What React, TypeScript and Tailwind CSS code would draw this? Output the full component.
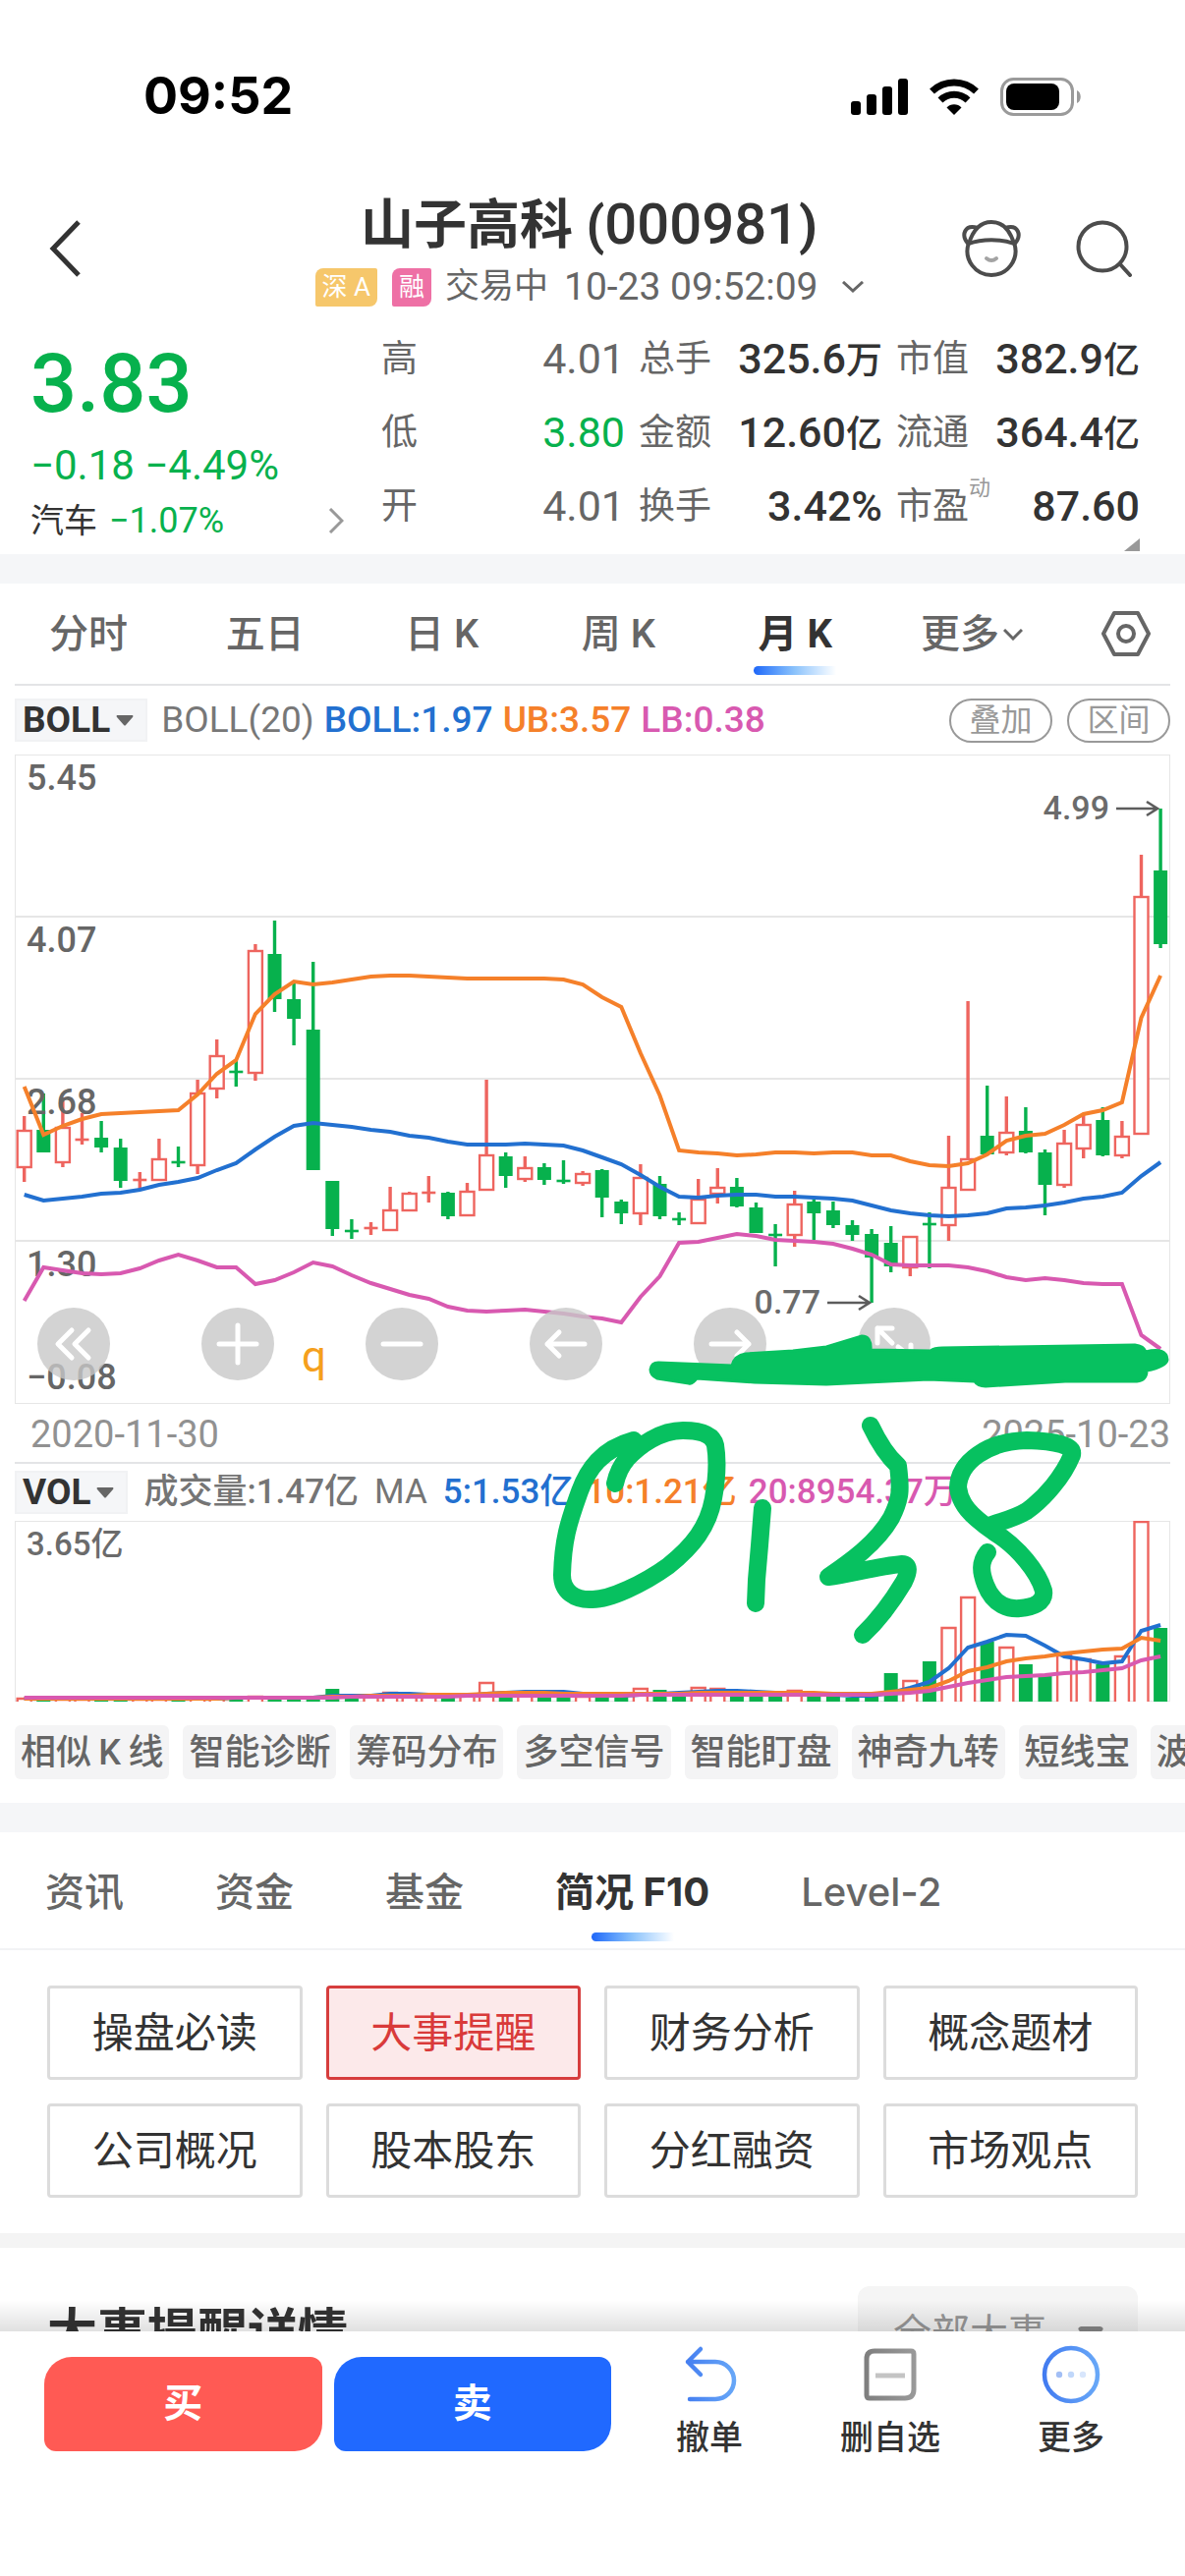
import { useState } from 'react'
import clsx from 'clsx'

type Candle = [high: number, top: number, bottom: number, low: number, up: 0 | 1]

// chart space is 1176 x 661, one candle per month
const CANDLES: Candle[] = [
    [368, 382, 421, 435, 1], [345, 382, 405, 405, 0], [349, 379, 416, 420, 1], [365, 391, 393, 397, 1],
    [373, 390, 400, 405, 0], [391, 400, 434, 441, 0], [425, 432, 434, 442, 1], [391, 411, 434, 434, 1],
    [399, 414, 416, 420, 0], [331, 344, 419, 427, 1], [290, 306, 341, 350, 1], [312, 322, 324, 338, 0],
    [193, 199, 325, 332, 1], [169, 203, 249, 262, 0], [232, 249, 269, 296, 0], [211, 280, 423, 423, 0],
    [434, 434, 483, 490, 0], [473, 484, 486, 493, 0], [476, 481, 483, 489, 1], [440, 463, 485, 485, 1],
    [445, 446, 465, 465, 1], [429, 445, 447, 456, 1], [445, 446, 470, 473, 0], [436, 444, 470, 470, 1],
    [331, 407, 444, 444, 1], [405, 409, 429, 441, 0], [409, 420, 433, 435, 1], [416, 420, 433, 438, 0],
    [413, 433, 435, 437, 0], [424, 426, 437, 439, 1], [422, 423, 451, 471, 0], [453, 455, 467, 478, 0],
    [417, 430, 468, 479, 1], [429, 437, 470, 473, 0], [466, 472, 474, 479, 0], [432, 452, 478, 478, 1],
    [421, 440, 448, 457, 1], [431, 440, 460, 461, 0], [456, 461, 487, 487, 0], [478, 488, 490, 521, 0],
    [444, 457, 490, 501, 1], [453, 455, 467, 494, 0], [455, 464, 479, 482, 0], [474, 479, 489, 495, 0],
    [483, 488, 512, 558, 0], [480, 497, 521, 527, 0], [490, 490, 523, 531, 1], [466, 477, 479, 523, 0],
    [388, 440, 480, 495, 1], [251, 411, 444, 444, 1], [337, 388, 407, 408, 0], [348, 384, 406, 408, 1],
    [359, 383, 405, 406, 0], [402, 405, 438, 469, 0], [382, 395, 439, 441, 1], [367, 376, 402, 411, 1],
    [359, 372, 408, 409, 0], [373, 388, 409, 411, 1], [102, 144, 387, 387, 1], [55, 118, 193, 197, 0],
]

const UB = [
    338, 387, 378, 371, 366, 365, 364, 363, 362, 346, 325, 311, 264, 244, 231, 234, 232, 229, 226, 225,
    225, 226, 227, 228, 228, 228, 228, 228, 229, 234, 247, 257, 304, 347, 403, 405, 406, 408, 407, 405,
    405, 406, 405, 405, 408, 408, 414, 418, 419, 416, 407, 393, 388, 386, 377, 366, 362, 354, 268, 225,
]
const BOLL = [
    448, 454, 452, 450, 447, 446, 443, 438, 435, 431, 423, 416, 402, 389, 378, 375, 377, 379, 382, 384,
    388, 390, 394, 397, 397, 397, 396, 397, 398, 403, 410, 417, 428, 440, 450, 451, 449, 448, 448, 450,
    450, 451, 452, 454, 459, 464, 467, 469, 470, 469, 467, 462, 461, 459, 456, 452, 450, 446, 429, 415,
]
const LB = [
    556, 522, 525, 528, 529, 528, 523, 515, 509, 515, 522, 522, 539, 535, 527, 517, 521, 530, 538, 544,
    550, 554, 562, 566, 567, 566, 565, 567, 569, 572, 574, 578, 552, 531, 497, 496, 492, 488, 490, 494,
    495, 496, 498, 503, 509, 519, 520, 520, 520, 522, 526, 532, 535, 533, 535, 538, 539, 539, 591, 605,
]

const VOLUMES = [
    181, 182, 182, 182, 182, 182, 182, 182, 181, 181, 180, 181, 179, 180, 181, 181, 171, 179, 179, 175,
    178, 178, 180, 178, 165, 179, 178, 178, 178, 179, 178, 178, 171, 172, 175, 170, 171, 175, 177, 176,
    173, 177, 178, 180, 179, 155, 163, 143, 109, 78, 123, 129, 146, 157, 137, 141, 146, 138, 1, 109,
]
const MA5 = [
    181, 181, 181, 181, 181, 181, 181, 181, 181, 181, 181, 180, 180, 180, 180, 180, 178, 178, 178, 176,
    176, 177, 178, 178, 176, 175, 174, 174, 174, 176, 177, 178, 177, 176, 175, 174, 173, 173, 174, 175,
    175, 176, 177, 178, 178, 175, 170, 164, 150, 129, 123, 116, 117, 127, 138, 141, 145, 143, 112, 106,
]
const MA10 = [
    181, 181, 181, 181, 181, 181, 181, 181, 181, 181, 181, 180, 180, 180, 180, 180, 179, 179, 178, 178,
    178, 177, 177, 177, 176, 175, 175, 175, 176, 176, 176, 176, 176, 176, 176, 175, 175, 175, 175, 175,
    175, 175, 176, 176, 176, 174, 172, 170, 163, 153, 149, 143, 140, 138, 135, 133, 131, 130, 119, 122,
]
const MA20 = [
    180, 180, 180, 180, 180, 180, 180, 180, 180, 180, 180, 180, 180, 180, 180, 180, 180, 179, 179, 179,
    179, 179, 179, 178, 178, 178, 178, 178, 178, 178, 178, 178, 177, 177, 177, 177, 177, 177, 177, 177,
    177, 177, 177, 177, 177, 176, 175, 173, 169, 165, 162, 159, 158, 157, 155, 154, 152, 150, 142, 138,
]

const RED = '#ee655f'
const GREEN = '#07b14d'
const STEP = 19.6

const cx = (i: number) => 9.7 + i * STEP
const toPoints = (ys: number[]) => ys.map((y, i) => `${cx(i)},${y}`).join(' ')

function Line({ data, color }: { data: number[]; color: string }) {
    return <polyline points={toPoints(data)} fill="none" stroke={color} strokeWidth={4} />
}

function PriceChart() {
    return (
        <svg viewBox="0 0 1176 661" className="block w-full h-auto">
            <rect x={0.5} y={0.5} width={1175} height={660} fill="none" stroke="#e6e6e6" />
            {[165, 330, 495].map((y) => (
                <path key={y} d={`M0 ${y}H1176`} stroke="#e6e6e6" strokeWidth={2} />
            ))}
            {CANDLES.map(([high, top, bottom, low, up], i) => {
                const thin = bottom - top <= 2
                const color = up ? RED : GREEN
                return (
                    <g key={i} stroke={color}>
                        <path d={`M${cx(i)} ${high}V${thin ? low : top}M${cx(i)} ${bottom}V${low}`} strokeWidth={3.4} />
                        {thin ? (
                            <path d={`M${cx(i) - 7} ${(top + bottom) / 2}h14`} strokeWidth={2.6} />
                        ) : up ? (
                            <rect x={cx(i) - 7} y={top + 1} width={14} height={bottom - top - 2} fill="#fff" strokeWidth={2.4} />
                        ) : (
                            <rect x={cx(i) - 7} y={top} width={14} height={bottom - top} fill={color} stroke="none" />
                        )}
                    </g>
                )
            })}
            <g fill="#666" fontSize={36} fontWeight={500}>
                <text x={12} y={36}>5.45</text>
                <text x={12} y={201}>4.07</text>
                <text x={12} y={366}>2.68</text>
                <text x={12} y={531}>1.30</text>
                <text x={12} y={646}>−0.08</text>
            </g>
            <Line data={UB} color="#f5802a" />
            <Line data={BOLL} color="#2270d0" />
            <Line data={LB} color="#d859b0" />
            <g fill="#6b6b6b" fontSize={34} fontWeight={500}>
                <text x={1114} y={66} textAnchor="end">4.99</text>
                <text x={820} y={569} textAnchor="end">0.77</text>
            </g>
            <g fill="none" stroke="#5c5c5c" strokeWidth={2.6}>
                <path d="M1121 55h42M1152 48l11 7-11 7" />
                <path d="M827 558h42M859 551l11 7-11 7" />
            </g>
            <text x={292} y={628} fontSize={44} fill="#f5a01d">q</text>
        </svg>
    )
}

function VolumeChart() {
    return (
        <svg viewBox="0 0 1176 184" className="block w-full h-auto">
            <rect x={0.5} y={0.5} width={1175} height={183} fill="none" stroke="#e6e6e6" />
            {VOLUMES.map((top, i) =>
                CANDLES[i][4] ? (
                    <path key={i} d={`M${cx(i) - 7} 184V${top}h14V184`} fill="#fff" stroke={RED} strokeWidth={2.4} />
                ) : (
                    <rect key={i} x={cx(i) - 7} y={top} width={14} height={184 - top} fill={GREEN} />
                )
            )}
            <Line data={MA5} color="#2270d0" />
            <Line data={MA10} color="#f5802a" />
            <Line data={MA20} color="#d859b0" />
            <text x={12} y={35} fontSize={33} fontWeight={500} fill="#6b6b6b">3.65亿</text>
        </svg>
    )
}

// hand-drawn marker on top of both charts
function Scribble() {
    return (
        <svg viewBox="0 0 1176 964" className="absolute inset-x-0 top-0 w-full h-auto pointer-events-none">
            <g fill="none" stroke="#07c160" strokeWidth={18} strokeLinecap="round" strokeLinejoin="round">
                <path d="M630 698C597 707 583 728 575 750C563 783 558 800 557 835C557 852 570 861 588 860C606 860 640 844 665 826C690 806 706 786 711 757C715 735 715 715 713 703C710 690 693 688 680 688C657 688 636 703 623 717C616 725 613 733 611 742" />
                <path d="M761 767L758 805L755 840L754 864" />
                <path d="M871 683C880 702 888 714 899 724C902 748 902 757 892 777C877 803 850 822 828 837C850 834 880 826 903 824C911 824 910 832 905 842C893 862 880 880 863 896" />
                <path d="M990 812C982 822 983 832 988 845C996 866 1012 870 1023 869C1035 868 1049 864 1047 851C1042 833 1022 807 996 791C972 774 962 763 960 746C961 720 990 699 1030 698C1060 699 1078 703 1076 713C1067 735 1048 757 1030 770C1015 779 1000 781 990 786" />
            </g>
            <path
                d="M655 619L730 622C732 614 737 611 744 610L792 607L826 603L862 592Q872 592 871 606L932 607Q936 604 944 604L1140 601Q1149 602 1151 608Q1172 603 1173 616Q1172 623 1152 627Q1152 637 1142 638L1069 638L988 643Q980 643 977 638L930 636L826 641L753 639L694 635Q690 641 686 640L654 635Q647 632 647 626Q648 619 655 619Z"
                fill="#07c160"
                stroke="#07c160"
                strokeWidth={3}
            />
        </svg>
    )
}

const CONTROLS = [
    { label: '展开', d: 'M25 13l-14 14 14 14M42 13l-14 14 14 14' },
    { label: '放大', d: 'M8 27h38M27 8v38' },
    { label: '缩小', d: 'M8 27h38' },
    { label: '左移', d: 'M8 27h38M20 15l-12 12 12 12' },
    { label: '右移', d: 'M8 27h38M34 15l12 12-12 12' },
    { label: '全屏', d: 'M10 26V11h15M10 11l15 15M31 30l5 4M44 28v16h-15' },
]

function ChartControls() {
    return (
        <div className="absolute left-[23px] top-[563px] flex gap-[93px]">
            {CONTROLS.map(({ label, d }) => (
                <button
                    key={label}
                    type="button"
                    aria-label={label}
                    className="flex size-[74px] items-center justify-center rounded-full bg-[#c8c8c8]/80"
                >
                    <svg viewBox="0 0 54 54" className="size-[54px]" fill="none" stroke="#fff" strokeWidth={5} strokeLinecap="round" strokeLinejoin="round">
                        <path d={d} />
                    </svg>
                </button>
            ))}
        </div>
    )
}

function StatusBar() {
    return (
        <div className="flex h-[180px] items-center justify-between pt-4 pl-[146px] pr-[106px]">
            <span className="font-['Inter',sans-serif] text-[52px] font-bold text-black">09:52</span>
            <div className="flex items-center gap-[22px]">
                <svg viewBox="0 0 58 37" className="h-[37px] w-[58px]">
                    <rect x={0} y={23} width={10} height={14} rx={3} />
                    <rect x={16} y={16} width={10} height={21} rx={3} />
                    <rect x={32} y={8} width={10} height={29} rx={3} />
                    <rect x={48} y={0} width={10} height={37} rx={3} />
                </svg>
                <svg viewBox="0 0 50 37" className="h-[37px] w-[50px]" fill="none" stroke="#000" strokeWidth={7}>
                    <path d="M2.5 13A32.5 32.5 0 0 1 47.5 13" />
                    <path d="M11 22A20 20 0 0 1 39 22" />
                    <path d="M25 37L17.500 29.500A10.500 10.500 0 0 1 32.500 29.500Z" fill="#000" stroke="none" />
                </svg>
                <svg viewBox="0 0 82 39" className="h-[39px] w-[82px]">
                    <rect x={1.500} y={1.500} width={72} height={36} rx={12} fill="none" stroke="#9a9a9a" strokeWidth={3} />
                    <rect x={6} y={6} width={54} height={27} rx={8} />
                    <path d="M78 13C83 15 83 24 78 26Z" fill="#9a9a9a" />
                </svg>
            </div>
        </div>
    )
}

function Header() {
    return (
        <header className="flex h-[146px] items-center pl-[46px] pr-[53px]">
            <button type="button" aria-label="返回" className="flex flex-1 justify-start">
                <svg viewBox="0 0 40 60" className="h-[60px] w-10" fill="none" stroke="#333" strokeWidth={5}>
                    <path d="M34 3L8 30l26 27" />
                </svg>
            </button>
            <div className="flex flex-col items-center gap-3 pt-1">
                <h1 className="text-[54px] leading-[60px] font-bold text-[#333]">
                    山子高科 (<span className="text-[58px] font-medium">000981</span>)
                </h1>
                <div className="flex h-10 items-center text-[#666]">
                    <span className="flex h-[39px] items-center rounded-tl-lg rounded-tr-xs rounded-br-lg rounded-bl-xs bg-[#f6c76b] px-[7px] text-[26px] text-white">
                        深 A
                    </span>
                    <span className="ml-[15px] flex h-[39px] items-center rounded-tl-lg rounded-tr-xs rounded-br-lg rounded-bl-xs bg-[#ee70a5] px-[7px] text-[26px] text-white">
                        融
                    </span>
                    <span className="ml-[14px] text-[35px]">交易中</span>
                    <span className="ml-4 text-[39px]">10-23 09:52:09</span>
                    <svg viewBox="0 0 22 12" className="ml-6 h-3 w-[22px]" fill="none" stroke="#666" strokeWidth={3}>
                        <path d="M1 1l10 9L21 1" />
                    </svg>
                </div>
            </div>
            <div className="flex flex-1 items-center justify-end gap-[56px]">
                <button type="button" aria-label="助手">
                    <svg viewBox="0 0 60 58" className="h-[58px] w-[60px]" fill="none" stroke="#4c4c4c" strokeWidth={4} strokeLinejoin="round">
                        <path d="M6.500 24.500A24.500 24.500 0 1 0 53.500 24.500" />
                        <path d="M7 24C11 11 18 2 30 2s19 9 23 22C40 19 20 19 7 24Z" />
                        <path d="M7 25C-2 15 3 4 16 8" />
                        <path d="M53 25C62 15 57 4 44 8" />
                        <path d="M25 39q5 4 10 0" stroke="#a3a3a3" strokeLinecap="round" />
                    </svg>
                </button>
                <button type="button" aria-label="搜索">
                    <svg viewBox="0 0 58 58" className="size-[58px]" fill="none" stroke="#4c4c4c" strokeWidth={4} strokeLinecap="round">
                        <circle cx={27} cy={27} r={24.5} />
                        <path d="M45 45l10 11" />
                    </svg>
                </button>
            </div>
        </header>
    )
}

interface Quote {
    label: string
    value: string
    unit?: string
    tone?: string
    sup?: string
}

const QUOTES: Quote[] = [
    { label: '高', value: '4.01', tone: 'text-[#666]' },
    { label: '总手', value: '325.6', unit: '万' },
    { label: '市值', value: '382.9', unit: '亿' },
    { label: '低', value: '3.80', tone: 'text-[#07b14d]' },
    { label: '金额', value: '12.60', unit: '亿' },
    { label: '流通', value: '364.4', unit: '亿' },
    { label: '开', value: '4.01', tone: 'text-[#666]' },
    { label: '换手', value: '3.42%' },
    { label: '市盈', value: '87.60', sup: '动' },
]

function QuotePanel() {
    return (
        <section className="relative flex h-[238px] pt-0.5 pl-[31px] pr-[46px]">
            <div className="w-[357px] pt-[23px] text-[#07b14d]">
                <div className="text-[83px] leading-[80px] font-medium">3.83</div>
                <div className="mt-[13px] text-[42px] leading-[60px]">−0.18 −4.49%</div>
                <a href="#sector" className="flex h-[52px] items-center pr-[38px] text-[36px]">
                    <span className="mr-3 text-[34px] text-[#333]">汽车</span>−1.07%
                    <svg viewBox="0 0 16 26" className="ml-auto h-[26px] w-4" fill="none" stroke="#999" strokeWidth={3}>
                        <path d="M2 1l12 12L2 25" />
                    </svg>
                </a>
            </div>
            <dl className="grid flex-1 grid-cols-3 content-start gap-x-[14px]">
                {QUOTES.map(({ label, value, unit, tone, sup }) => (
                    <div key={label} className="flex h-[75px] items-center justify-between">
                        <dt className="relative text-[37px] text-[#666]">
                            {label}
                            {sup && <span className="absolute -top-2 left-full text-[22px] text-[#999]">{sup}</span>}
                        </dt>
                        <dd className={clsx('text-[43px]', tone ?? 'font-medium text-[#333]')}>
                            {value}
                            {unit && <span className="text-[37px]">{unit}</span>}
                        </dd>
                    </div>
                ))}
            </dl>
            <svg viewBox="0 0 16 13" className="absolute right-[46px] bottom-[3px] h-[13px] w-4">
                <path d="M16 0v13H0Z" fill="#999" />
            </svg>
        </section>
    )
}

const PERIODS = ['分时', '五日', '日 K', '周 K', '月 K', '更多']

function PeriodTabs() {
    const [active, setActive] = useState('月 K')
    return (
        <nav className="mx-[15px] flex h-[104px] border-b-2 border-[#e3e4e6]">
            <div className="-ml-[15px] grid flex-1 grid-cols-6">
                {PERIODS.map((name) => (
                    <button
                        key={name}
                        type="button"
                        onClick={() => setActive(name)}
                        className={clsx(
                            'relative flex items-center justify-center pt-0.5 text-[40px]',
                            name === active ? 'font-bold text-[#333]' : 'font-medium text-[#666]'
                        )}
                    >
                        {name}
                        {name === '更多' && (
                            <svg viewBox="0 0 20 12" className="ml-1 h-3 w-5" fill="none" stroke="#666" strokeWidth={3}>
                                <path d="M1 1l9 9 9-9" />
                            </svg>
                        )}
                        {name === active && (
                            <span className="absolute bottom-[9px] left-1/2 h-[9px] w-[84px] -translate-x-1/2 rounded-l-full bg-linear-to-r from-[#1f66f8] via-[#8cc3fb] to-white" />
                        )}
                    </button>
                ))}
            </div>
            <button type="button" aria-label="设置" className="flex w-[112px] items-center justify-center pl-[22px]">
                <svg viewBox="0 0 50 46" className="h-[46px] w-[50px]" fill="none" stroke="#666" strokeWidth={4} strokeLinejoin="round">
                    <path d="M2 23L13 2h24l11 21-11 21H13Z" />
                    <circle cx={25} cy={23} r={8} />
                </svg>
            </button>
        </nav>
    )
}

function IndicatorButton({ name }: { name: string }) {
    return (
        <button type="button" className="flex h-11 items-center gap-1.5 border-2 border-[#f1f2f4] bg-[#f5f6f8] pr-3 pl-1.5 text-[37px] font-bold text-[#333]">
            {name}
            <svg viewBox="0 0 18 11" className="h-[11px] w-[18px]">
                <path d="M1 0h16q1 1 0 2L10 10q-1 1-2 0L1 2Q0 1 1 0Z" fill="#666" />
            </svg>
        </button>
    )
}

function ChartSection() {
    return (
        <section className="px-[15px]">
            <div className="flex h-[70px] items-center gap-[10px] text-[37px] font-medium">
                <IndicatorButton name="BOLL" />
                <span className="ml-1 font-normal text-[#777]">BOLL(20)</span>
                <span className="text-[#2270d0]">BOLL:1.97</span>
                <span className="text-[#f5802a]">UB:3.57</span>
                <span className="text-[#d859b0]">LB:0.38</span>
                <div className="ml-auto flex gap-[15px] text-[32px] font-normal text-[#999]">
                    <button type="button" className="h-[45px] w-[105px] rounded-full border-2 border-[#999] leading-[40px]">叠加</button>
                    <button type="button" className="h-[45px] w-[105px] rounded-full border-2 border-[#999] leading-[40px]">区间</button>
                </div>
            </div>
            <div className="relative">
                <PriceChart />
                <ChartControls />
                <div className="flex h-[61px] items-center justify-between border-b-2 border-[#e3e4e6] pt-1 pl-4 text-[38px] text-[#919191]">
                    <span>2020-11-30</span>
                    <span>2025-10-23</span>
                </div>
                <div className="flex h-[58px] items-center gap-3 text-[35px] font-medium">
                    <IndicatorButton name="VOL" />
                    <span className="ml-1 text-[#757575]">成交量:1.47亿</span>
                    <span className="mx-1 font-normal text-[#757575]">MA</span>
                    <span className="text-[#2270d0]">5:1.53亿</span>
                    <span className="text-[#f5802a]">10:1.21亿</span>
                    <span className="text-[#d859b0]">20:8954.37万</span>
                </div>
                <VolumeChart />
                <Scribble />
            </div>
        </section>
    )
}

// thin spaces keep the K chip as wide as its neighbours
const TOOLS = ['相似\u2009K\u2009线', '智能诊断', '筹码分布', '多空信号', '智能盯盘', '神奇九转', '短线宝', '波段王']

function ToolChips() {
    return (
        <div className="flex gap-[14px] overflow-hidden pt-6 pb-6 pl-[15px]">
            {TOOLS.map((name) => (
                <button
                    key={name}
                    type="button"
                    className="h-[55px] shrink-0 rounded-md bg-[#f4f4f5] px-1.5 text-[36px] leading-[54px] font-medium whitespace-nowrap text-[#666]"
                >
                    {name}
                </button>
            ))}
        </div>
    )
}

const SECTIONS = ['资讯', '资金', '基金', '简况 F10', 'Level-2']

function SectionTabs() {
    const [active, setActive] = useState('简况 F10')
    return (
        <nav className="flex h-[120px] gap-[93px] border-b-2 border-[#f2f3f5] pl-[46px] font-['Inter','Noto_Sans_CJK_SC',sans-serif]">
            {SECTIONS.map((name) => (
                <button
                    key={name}
                    type="button"
                    onClick={() => setActive(name)}
                    className={clsx('relative pt-1 text-[40px]', name === active ? 'font-bold text-[#333]' : 'font-medium text-[#666]')}
                >
                    {name}
                    {name === active && (
                        <span className="absolute bottom-[7px] left-1/2 h-[9px] w-[84px] -translate-x-1/2 rounded-l-full bg-linear-to-r from-[#1f66f8] via-[#8cc3fb] to-white" />
                    )}
                </button>
            ))}
        </nav>
    )
}

const TOPICS = ['操盘必读', '大事提醒', '财务分析', '概念题材', '公司概况', '股本股东', '分红融资', '市场观点']

function TopicGrid() {
    const [active, setActive] = useState('大事提醒')
    return (
        <div className="grid grid-cols-4 gap-6 px-12 py-9">
            {TOPICS.map((name) => (
                <button
                    key={name}
                    type="button"
                    onClick={() => setActive(name)}
                    className={clsx(
                        'h-24 rounded-sm border-[3px] text-[42px]',
                        name === active ? 'border-[#d63d3d] bg-[#fce9ea] text-[#d93a3a]' : 'border-[#dcdcdc] text-[#333]'
                    )}
                >
                    {name}
                </button>
            ))}
        </div>
    )
}

function EventDetail() {
    return (
        <section className="flex items-center justify-between px-12 pt-[39px]">
            <h2 className="text-[51px] font-bold text-[#333]">大事提醒详情</h2>
            <div className="relative">
                <select
                    aria-label="大事类型"
                    className="h-24 w-[285px] appearance-none rounded-xl bg-[#f5f5f5] pl-9 text-[39px] text-[#999]"
                >
                    <option>全部大事</option>
                </select>
                <svg viewBox="0 0 26 16" className="pointer-events-none absolute top-[41px] right-[35px] h-4 w-[26px]">
                    <path d="M3 0h20q4 1 2 4L15 15q-2 2-4 0L1 4Q-1 1 3 0Z" fill="#888" />
                </svg>
            </div>
        </section>
    )
}

function TradeBar() {
    return (
        <footer className="relative flex gap-2 bg-white pt-[14px] pr-6 pb-[119px] pl-[45px]">
            <div className="absolute inset-x-0 bottom-full h-8 bg-linear-to-t from-black/12 to-transparent" />
            <div className="mt-3 grid flex-[23] grid-cols-2 gap-3 text-[40px] font-bold text-white">
                <button type="button" className="h-24 rounded-tl-[28px] rounded-tr-xl rounded-br-[28px] rounded-bl-xl bg-[#ff5a54]">买</button>
                <button type="button" className="h-24 rounded-tl-[28px] rounded-tr-xl rounded-br-[28px] rounded-bl-xl bg-[#2069ff]">卖</button>
            </div>
            <div className="grid flex-[22] grid-cols-3 text-[34px] leading-[44px] font-medium text-[#333]">
                <button type="button" className="flex flex-col items-center gap-3">
                    <svg viewBox="0 0 60 60" className="size-[60px]" fill="none" stroke="url(#blue)" strokeWidth={4.500} strokeLinecap="round" strokeLinejoin="round">
                        <defs>
                            <linearGradient id="blue" gradientUnits="userSpaceOnUse" x1={0} x2={60} y1={0} y2={0}>
                                <stop offset="0" stopColor="#4079f0" />
                                <stop offset="1" stopColor="#6aaaf8" />
                            </linearGradient>
                            <linearGradient id="gray" gradientUnits="userSpaceOnUse" x1={0} x2={60} y1={0} y2={0}>
                                <stop offset="0" stopColor="#7c7c7c" />
                                <stop offset="1" stopColor="#9c9c9c" />
                            </linearGradient>
                        </defs>
                        <path d="M21 4L8 17l13 13M8 17h28a19 19 0 0 1 0 38H10" />
                    </svg>
                    撤单
                </button>
                <button type="button" className="flex flex-col items-center gap-3">
                    <svg viewBox="0 0 60 60" className="size-[60px]" fill="none" strokeWidth={5}>
                        <path d="M14 6h37q3 0 3 3v36q0 9-9 9H9q-3 0-3-3V14q0-8 8-8Z" stroke="url(#gray)" />
                        <path d="M15 31h30" stroke="#c4c4c4" strokeLinecap="butt" />
                    </svg>
                    删自选
                </button>
                <button type="button" className="flex flex-col items-center gap-3">
                    <svg viewBox="0 0 60 60" className="size-[60px]">
                        <circle cx={30} cy={30} r={27} fill="none" stroke="url(#blue)" strokeWidth={4.500} />
                        <circle cx={18} cy={30} r={3.200} fill="#a3bff5" />
                        <circle cx={30} cy={30} r={3.200} fill="#c0d7fa" />
                        <circle cx={42} cy={30} r={3.200} fill="#d8e6fc" />
                    </svg>
                    更多
                </button>
            </div>
        </footer>
    )
}

export default function App() {
    return (
        <div className="flex h-screen flex-col bg-white font-['Roboto','Noto_Sans_CJK_SC',sans-serif]">
            <main className="min-h-0 flex-1 overflow-hidden">
                <StatusBar />
                <Header />
                <QuotePanel />
                <div className="h-[30px] bg-[#f5f6f8]" />
                <PeriodTabs />
                <ChartSection />
                <ToolChips />
                <div className="h-[30px] bg-[#f5f6f8]" />
                <SectionTabs />
                <TopicGrid />
                <div className="h-[15px] bg-[#f4f4f4]" />
                <EventDetail />
            </main>
            <TradeBar />
        </div>
    )
}
